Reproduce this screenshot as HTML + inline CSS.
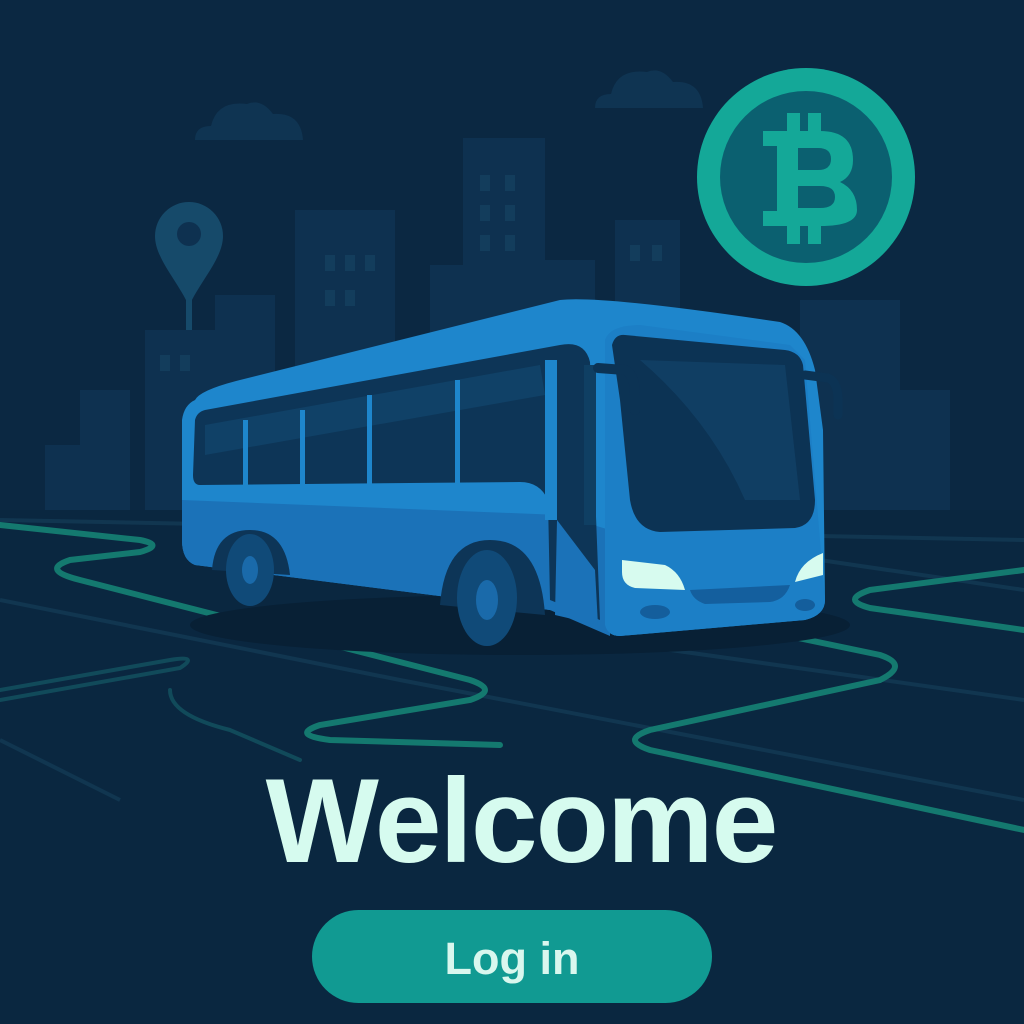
<!DOCTYPE html>
<html><head><meta charset="utf-8"><style>
html,body{margin:0;padding:0;width:1024px;height:1024px;overflow:hidden;background:#0b2942}
</style></head><body>
<svg width="1024" height="1024" viewBox="0 0 1024 1024" xmlns="http://www.w3.org/2000/svg" style="position:absolute;left:0;top:0">
<rect width="1024" height="1024" fill="#0b2842"/>
<g fill="#0f3452">
<path d="M195 140 q0-14 16-14 q6-26 36-22 q14-6 26 10 q28-2 30 26z"/>
<path d="M595 108 q0-14 16-14 q6-26 36-22 q14-6 26 10 q28-2 30 26z"/>
</g>
<g fill="#0e3150">
<rect x="45" y="445" width="80" height="70"/>
<rect x="80" y="390" width="50" height="120"/>
<rect x="145" y="330" width="80" height="180"/>
<rect x="215" y="295" width="60" height="215"/>
<rect x="295" y="210" width="100" height="300"/>
<rect x="430" y="265" width="50" height="250"/>
<rect x="463" y="138" width="82" height="380"/>
<rect x="545" y="260" width="50" height="250"/>
<rect x="615" y="220" width="65" height="290"/>
<rect x="800" y="300" width="100" height="220"/>
<rect x="880" y="390" width="70" height="130"/>
</g>
<g fill="#133d5c">
<rect x="325" y="255" width="10" height="16"/><rect x="345" y="255" width="10" height="16"/><rect x="365" y="255" width="10" height="16"/>
<rect x="325" y="290" width="10" height="16"/><rect x="345" y="290" width="10" height="16"/>
<rect x="480" y="175" width="10" height="16"/><rect x="505" y="175" width="10" height="16"/>
<rect x="480" y="205" width="10" height="16"/><rect x="505" y="205" width="10" height="16"/>
<rect x="480" y="235" width="10" height="16"/><rect x="505" y="235" width="10" height="16"/>
<rect x="160" y="355" width="10" height="16"/><rect x="180" y="355" width="10" height="16"/>
<rect x="630" y="245" width="10" height="16"/><rect x="652" y="245" width="10" height="16"/>
</g>
<path d="M189 202 a34 34 0 0 1 34 34 c0 22-22 44-34 70 c-12-26-34-48-34-70 a34 34 0 0 1 34-34z" fill="#164a6a"/>
<circle cx="189" cy="234" r="12" fill="#0e3150"/>
<rect x="186" y="300" width="6" height="30" fill="#164a6a"/>
<rect x="0" y="510" width="1024" height="514" fill="#0a2740"/>
<g stroke="#113650" stroke-width="4" fill="none">
<path d="M0 600 L400 680 L1024 800"/>
<path d="M0 520 L1024 540"/>
<path d="M0 740 L120 800"/>
<path d="M600 640 L1024 700"/>
<path d="M820 560 L1024 590"/>
</g>
<g stroke="#14796f" stroke-width="6" fill="none" stroke-linecap="round">
<path d="M0 525 L140 540 q25 5 0 12 L70 560 q-30 10 10 20 L470 680 q30 10 0 20 L320 725 q-30 10 10 15 L500 745"/>
<path d="M760 630 L880 655 q30 10 0 25 L650 730 q-30 10 0 20 L1024 830"/>
<path d="M1024 570 L870 590 q-30 10 0 18 L1024 630"/>
<path d="M0 690 L170 660 q30 -5 10 8 L0 700" stroke-width="4" stroke="#114a5a"/>
<path d="M170 690 q0 25 60 40 L300 760" stroke-width="4" stroke="#114a5a"/>
</g>
<ellipse cx="520" cy="625" rx="330" ry="30" fill="#082035"/>
<path d="M195 400 Q200 390 240 380 L560 300 Q600 295 780 322 Q805 330 815 370 L823 430 L825 600 Q825 615 805 620 L620 636 Q608 636 605 625 L550 610 L195 565 Q182 560 182 540 L182 420 Q184 405 195 400z" fill="#1e86cc"/>
<path d="M182 500 L560 515 L610 530 L610 636 L550 610 L195 565 Q182 560 182 540z" fill="#1b72b8"/>
<path d="M605 340 Q610 325 640 325 L790 345 L805 360 L825 600 Q825 615 805 620 L620 636 Q608 636 605 625z" fill="#1c7fc6"/>
<path d="M195 420 Q197 412 205 410 L560 345 Q585 340 590 362 L600 620 L550 600 L548 500 Q540 482 520 482 L200 485 Q193 485 193 475z" fill="#0d3557"/>
<path d="M205 425 L540 365 L545 395 L205 455z" fill="#134a72" opacity="0.6"/>
<g fill="#1e86cc">
<rect x="243" y="420" width="5" height="65"/><rect x="300" y="410" width="5" height="75"/><rect x="367" y="395" width="5" height="90"/><rect x="455" y="380" width="5" height="103"/><rect x="545" y="360" width="12" height="160"/>
</g>
<path d="M557 520 L595 570 L598 625 L555 615z" fill="#1b72b8"/>
<rect x="584" y="365" width="12" height="160" fill="#0f3f63"/>
<path d="M612 345 Q615 334 625 335 L785 350 Q800 352 803 365 L815 500 Q815 525 795 528 L660 532 Q635 530 630 500 L620 400z" fill="#0c3354"/>
<path d="M640 360 L785 365 L800 500 L745 500 Q710 420 640 360z" fill="#124369" opacity="0.7"/>
<path d="M598 368 L625 370 Q635 375 635 395 L635 410" stroke="#0c3354" stroke-width="10" fill="none" stroke-linecap="round"/>
<path d="M805 375 L828 378 Q838 382 838 400 L838 415" stroke="#0c3354" stroke-width="9" fill="none" stroke-linecap="round"/>
<path d="M622 560 L665 565 Q680 572 685 590 L635 588 Q622 585 622 572z" fill="#d7fbef"/>
<path d="M823 553 L823 575 L795 582 Q800 562 823 553z" fill="#d7fbef"/>
<path d="M690 590 L790 585 Q785 600 770 602 L705 604 Q693 600 690 590z" fill="#145f9e"/>
<ellipse cx="655" cy="612" rx="15" ry="7" fill="#145e9c"/>
<ellipse cx="805" cy="605" rx="10" ry="6" fill="#145e9c"/>
<path d="M212 570 Q215 530 250 530 Q285 530 290 575z" fill="#0d3557"/>
<ellipse cx="250" cy="570" rx="24" ry="36" fill="#104a78"/>
<ellipse cx="250" cy="570" rx="8" ry="14" fill="#1a6aaa"/>
<path d="M440 605 Q445 540 490 540 Q540 540 545 615z" fill="#0d3557"/>
<ellipse cx="487" cy="598" rx="30" ry="48" fill="#104a78"/>
<ellipse cx="487" cy="600" rx="11" ry="20" fill="#1a6aaa"/>
<circle cx="806" cy="177" r="109" fill="#14a898"/>
<circle cx="806" cy="177" r="86" fill="#0b6070"/>
<g fill="#14a898">
<rect x="787" y="113" width="13" height="22"/><rect x="808" y="113" width="13" height="22"/>
<rect x="787" y="222" width="13" height="22"/><rect x="808" y="222" width="13" height="22"/>
<path d="M763 131 L820 131 Q853 131 853 160 Q853 176 840 182 Q857 190 857 210 Q857 226 820 226 L763 226 L763 211 L777 211 L777 146 L763 146z M798 148 L798 170 L818 170 Q831 170 831 159 Q831 148 818 148z M798 186 L798 208 L820 208 Q835 208 835 197 Q835 186 820 186z" fill-rule="evenodd"/>
</g>
<text x="521" y="862" text-anchor="middle" font-family="Liberation Sans, sans-serif" font-weight="bold" font-size="120" fill="#d6fbef" letter-spacing="-2">Welcome</text>
<rect x="312" y="910" width="400" height="93" rx="46.5" fill="#119a92"/>
<text x="512" y="974" text-anchor="middle" font-family="Liberation Sans, sans-serif" font-weight="bold" font-size="45" fill="#d9f7ee">Log in</text>
</svg>
</body></html>
